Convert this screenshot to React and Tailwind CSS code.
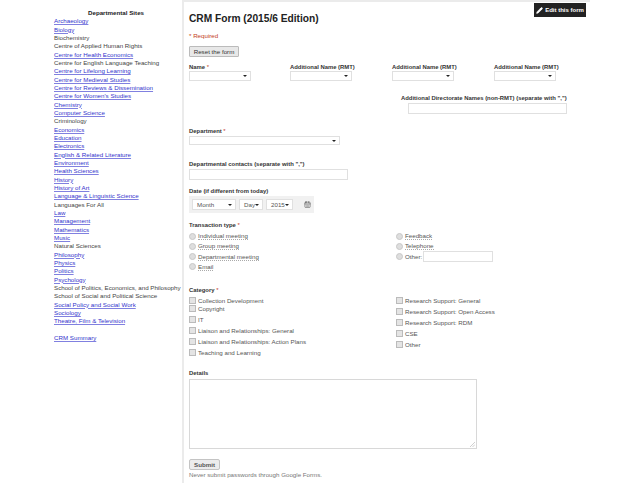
import { Pencil, CalendarDays } from "lucide-react";

const sites = [
  ["Archaeology", 1],
  ["Biology", 1],
  ["Biochemistry", 0],
  ["Centre of Applied Human Rights", 0],
  ["Centre for Health Economics", 1],
  ["Centre for English Language Teaching", 0],
  ["Centre for Lifelong Learning", 1],
  ["Centre for Medieval Studies", 1],
  ["Centre for Reviews & Dissemination", 1],
  ["Centre for Women's Studies", 1],
  ["Chemistry", 1],
  ["Computer Science", 1],
  ["Criminology", 0],
  ["Economics", 1],
  ["Education", 1],
  ["Electronics", 1],
  ["English & Related Literature", 1],
  ["Environment", 1],
  ["Health Sciences", 1],
  ["History", 1],
  ["History of Art", 1],
  ["Language & Linguistic Science", 1],
  ["Languages For All", 0],
  ["Law", 1],
  ["Management", 1],
  ["Mathematics", 1],
  ["Music", 1],
  ["Natural Sciences", 0],
  ["Philosophy", 1],
  ["Physics", 1],
  ["Politics", 1],
  ["Psychology", 1],
  ["School of Politics, Economics, and Philosophy", 0],
  ["School of Social and Political Science", 0],
  ["Social Policy and Social Work", 1],
  ["Sociology", 1],
  ["Theatre, Film & Television", 1],
];

function Site({ name, link }) {
  return (
    <div className="h-[8.33px] leading-[8.33px] whitespace-nowrap">
      {link ? (
        <span className="text-[#3333cc] underline decoration-[#8080e0]">{name}</span>
      ) : (
        <span className="text-[#444]">{name}</span>
      )}
    </div>
  );
}

function Label({ children, req, className = "" }) {
  return (
    <div className={`text-[5.9px] leading-[8px] font-bold text-[#333] whitespace-nowrap ${className}`}>
      {children}
      {req && <span className="text-[#c43b1d] font-normal"> *</span>}
    </div>
  );
}

function Select({ className = "", children }) {
  return (
    <div className={`flex items-center justify-between pl-1 pr-[3px] text-[6.2px] text-[#555] border border-[#e0e0e0] bg-white ${className}`}>
      <span>{children}</span>
      <span className="w-0 h-0 border-x-[2px] border-x-transparent border-t-[2px] border-t-[#222]" />
    </div>
  );
}

function NameField() {
  return (
    <div className="w-[102px] shrink-0">
      <Label>Additional Name (RMT)</Label>
      <Select className="w-[62px] h-[10px]" />
    </div>
  );
}

function Radio({ children, underline = true }) {
  return (
    <div className="flex items-center gap-[2px] h-[8px] text-[6.2px] text-[#555] whitespace-nowrap">
      <span className="w-[7px] h-[7px] rounded-full bg-[#dedede] border border-[#c8c8c8] shrink-0" />
      {underline ? (
        <span className="leading-[7px] border-b border-dotted border-[#aaa]">{children}</span>
      ) : (
        children
      )}
    </div>
  );
}

function Check({ children, className = "" }) {
  return (
    <div className={`flex items-center gap-[2px] h-[7px] text-[6.2px] text-[#555] whitespace-nowrap ${className}`}>
      <span className="w-[7px] h-[7px] bg-[#e4e4e4] border border-[#bbb] shrink-0" />
      {children}
    </div>
  );
}

export default function App() {
  return (
    <div className="relative flex w-[640px] h-[483px] overflow-hidden bg-white font-['Liberation_Sans',Arial,sans-serif]">
      {/* SIDEBAR */}
      <div className="w-[182px] shrink-0 pl-[54px] pt-[8.4px] text-[6.2px]">
        <div className="w-[108px] h-[9px] leading-[9px] font-bold text-[#222] text-center pl-[16px] whitespace-nowrap">
          Departmental Sites
        </div>
        <div>
          {sites.map(([name, link]) => (
            <Site key={name} name={name} link={link} />
          ))}
        </div>
        <div className="mt-[8.4px]">
          <Site name="CRM Summary" link={1} />
        </div>
      </div>

      {/* FORM */}
      <div className="w-[408px] h-[483px] border-l-2 border-t-2 border-[#ebebeb] pl-[5px] pt-[11px]">
        <h1 className="text-[10.2px] leading-[12px] font-bold text-[#222]">CRM Form (2015/6 Edition)</h1>
        <div className="mt-[7px] text-[6.2px] leading-[8px] text-[#c43b1d]">* Required</div>

        <button className="block mt-[6px] w-[50px] h-[11px] text-[6.2px] leading-[9px] text-[#333] bg-[#e8e8e8] border border-[#bbb] rounded-[1px]">
          Reset the form
        </button>

        <div className="flex mt-[6px]">
          <div className="w-[101px] shrink-0">
            <Label req>Name</Label>
            <Select className="w-[62px] h-[10px]" />
          </div>
          <NameField />
          <NameField />
          <NameField />
        </div>

        <div className="ml-[212px] mt-[13px]">
          <Label>Additional Directorate Names (non-RMT) (separate with ",")</Label>
          <div className="ml-[7px] mt-[1px] w-[159px] h-[11px] border border-[#e0e0e0]" />
        </div>

        <Label req className="mt-[13px]">Department</Label>
        <Select className="w-[151px] h-[9px] mt-[1px]" />

        <Label className="mt-[15px]">Departmental contacts (separate with ",")</Label>
        <div className="mt-[1px] w-[159px] h-[11px] border border-[#e0e0e0]" />

        <Label className="mt-[7px]">Date (if different from today)</Label>
        <div className="flex items-center mt-[1px] w-[125px] h-[17px] px-[3px] gap-[3px] bg-[#f1f1f1]">
          <Select className="w-[44px] h-[11px]">Month</Select>
          <Select className="w-[24px] h-[11px]">Day</Select>
          <Select className="w-[27px] h-[11px]">2015</Select>
          <CalendarDays size={7} className="ml-[8px] text-[#555]" />
        </div>

        <Label req className="mt-[8px]">Transaction type</Label>
        <div className="flex mt-[3px]">
          <div className="w-[207px] flex flex-col gap-[2.3px]">
            <Radio>Individual meeting</Radio>
            <Radio>Group meeting</Radio>
            <Radio>Departmental meeting</Radio>
            <Radio>Email</Radio>
          </div>
          <div className="flex flex-col gap-[2.3px]">
            <Radio>Feedback</Radio>
            <Radio>Telephone</Radio>
            <Radio underline={false}>
              Other:
              <span className="w-[70px] h-[11px] border border-[#e0e0e0] -ml-[1px]" />
            </Radio>
          </div>
        </div>

        <Label req className="mt-[15px]">Category</Label>
        <div className="flex mt-[3px]">
          <div className="w-[207px]">
            <Check>Collection Development</Check>
            <Check className="mt-[1.5px]">Copyright</Check>
            <Check className="mt-[4px]">IT</Check>
            <Check className="mt-[4px]">Liaison and Relationships: General</Check>
            <Check className="mt-[4px]">Liaison and Relationships: Action Plans</Check>
            <Check className="mt-[4px]">Teaching and Learning</Check>
          </div>
          <div>
            <Check>Research Support: General</Check>
            <Check className="mt-[4px]">Research Support: Open Access</Check>
            <Check className="mt-[4px]">Research Support: RDM</Check>
            <Check className="mt-[4px]">CSE</Check>
            <Check className="mt-[4px]">Other</Check>
          </div>
        </div>

        <Label className="mt-[13px]">Details</Label>
        <div className="relative mt-[2px] w-[288px] h-[70px] border border-[#d8d8d8]">
          <svg className="absolute right-[1px] bottom-[1px]" width="5" height="5" viewBox="0 0 5 5">
            <path d="M0 5 L5 0 M2.5 5 L5 2.5" stroke="#bbb" strokeWidth="0.7" />
          </svg>
        </div>

        <button className="block mt-[10px] w-[31px] h-[11px] text-[6.2px] leading-[9px] font-bold text-[#555] bg-[#ececec] border border-[#c4c4c4] rounded-[2px]">
          Submit
        </button>
        <div className="mt-[1px] text-[6.2px] leading-[8px] text-[#777]">
          Never submit passwords through Google Forms.
        </div>
      </div>

      {/* EDIT BUTTON */}
      <div className="absolute left-[534px] top-[3px] w-[52px] h-[14px] flex items-center justify-center gap-[2px] bg-[#222] text-white text-[6px] font-bold whitespace-nowrap">
        <Pencil size={7} fill="white" />
        Edit this form
      </div>
    </div>
  );
}
